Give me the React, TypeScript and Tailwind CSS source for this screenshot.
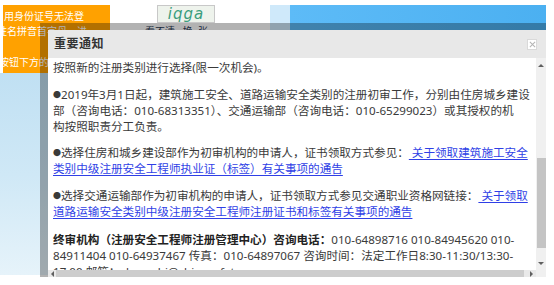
const sans = "font-[family-name:'Noto_Sans','Noto_Sans_CJK_SC',sans-serif]";

const Link = ({ children }: { children: React.ReactNode }) => (
  <a className="text-[#2f3fe6] underline underline-offset-2 decoration-1">{children}</a>
);

const Dot = () => <span className="inline-block w-[8px] text-[8px] align-[1px]">●</span>;

const Arrow = ({ dir }: { dir: "up" | "down" | "left" | "right" }) => {
  const pts = {
    up: "1,4 4,1 7,4",
    down: "1,1 4,4 7,1",
    left: "4,1 1,4 4,7",
    right: "1,1 4,4 1,7",
  }[dir];
  const vertical = dir === "up" || dir === "down";
  return (
    <svg viewBox={vertical ? "0 0 8 5" : "0 0 5 8"} className={vertical ? "w-[8px] h-[5px]" : "w-[5px] h-[8px]"}>
      <polygon points={pts} fill="#606060" />
    </svg>
  );
};

export default function App() {
  return (
    <div className={`relative w-[554px] h-[285px] overflow-hidden bg-white ${sans}`}>
      {/* page behind the dialog */}
      <div className="flex h-full">
        <div className="w-[110px] flex flex-col pt-[5px]">
          <div className="ml-[3px] h-[68px] bg-[#ffa100] overflow-hidden text-white text-[10px] leading-[15px] pt-[4px]">
            <div className="ml-[1px] whitespace-nowrap">用身份证号无法登</div>
            <div className="-ml-[6px] whitespace-nowrap">姓名拼音首字母，进</div>
            <div className="-ml-[4px] mt-[16px] whitespace-nowrap">按钮下方的</div>
          </div>
          <div className="h-[202px] bg-linear-to-b from-[#c0e0f3] via-[#cfe8f6] to-[#e6f3fa]" />
        </div>
        <div className="flex-1 flex flex-col pt-[5px]">
          <div className="flex h-[25px] items-start pr-[8px]">
            <div className="w-[47px]" />
            <div className="flex flex-col">
              <div className="w-[58px] h-[18px] bg-[#eef3ec] border border-[#c8c8c8] flex items-center justify-center">
                <span className="italic text-[15px] tracking-[1px] text-[#3a9d7d] font-[family-name:'DejaVu_Sans',sans-serif]">
                  iqga
                </span>
              </div>
              <div className="-ml-[12px] whitespace-nowrap text-[10px] leading-[10px] text-[#2a3a55] pt-[3px]">
                看不清&nbsp;&nbsp;&nbsp;换&nbsp;&nbsp;张
              </div>
            </div>
            <div className="w-[55px]" />
            <div className="w-[20px] h-[25px] bg-[#cfe9fa]" />
            <div className="flex-1 h-[25px] bg-linear-to-r from-[#5dbbf7] to-[#4bb0f1]" />
          </div>
        </div>
      </div>

      {/* dialog */}
      <div className="absolute left-[40px] top-[23px] w-[506px] h-[254px] border-l-[8px] border-t-[7px] border-black/30 bg-clip-padding flex flex-col">
        <div className="h-[28px] bg-[#e8e8e8] flex items-center justify-between pl-[6px] pr-[9px]">
          <span className="text-[12px] tracking-[0.5px] font-semibold text-[#333]">重要通知</span>
          <div className="w-[10px] h-[11px] bg-white border border-[#d9d9d9] flex items-center justify-center">
            <svg viewBox="0 0 8 8" className="w-[7px] h-[7px]">
              <path d="M1 1 L7 7 M7 1 L1 7" stroke="#b5b5b5" strokeWidth="1.2" />
            </svg>
          </div>
        </div>

        <div className="flex h-[212px] bg-white">
          <div className="flex-1 overflow-hidden pl-[5px] text-[11.6px] leading-[16px] text-[#3a3a3a] whitespace-nowrap">
            <div className="-mt-[14px]">
              <p>
                <Dot />已取得中级注册安全工程师职业资格证书的人员，在申请初始注册时可根据本人从事的专业领
                <br />
                按照新的注册类别进行选择(限一次机会)。
              </p>
              <p className="mt-[11px]">
                <Dot />2019年3月1日起，建筑施工安全、道路运输安全类别的注册初审工作，分别由住房城乡建设
                <br />
                部（咨询电话：010-68313351）、交通运输部（咨询电话：010-65299023）或其授权的机
                <br />
                构按照职责分工负责。
              </p>
              <p className="mt-[10px]">
                <Dot />选择住房和城乡建设部作为初审机构的申请人，证书领取方式参见：<Link>&nbsp;关于领取建筑施工安全</Link>
                <br />
                <Link>类别中级注册安全工程师执业证（标签）有关事项的通告</Link>
              </p>
              <p className="mt-[11px]">
                <Dot />选择交通运输部作为初审机构的申请人，证书领取方式参见交通职业资格网链接：<Link>&nbsp;关于领取</Link>
                <br />
                <Link>道路运输安全类别中级注册安全工程师注册证书和标签有关事项的通告</Link>
              </p>
              <p className="mt-[12px]">
                <b className="text-[#222]">终审机构（注册安全工程师注册管理中心）咨询电话：</b>010-64898716 010-84945620 010-
                <br />
                84911404 010-64937467 传真：010-64897067 咨询时间：法定工作日8:30-11:30/13:30-
                <br />
                17:00 邮箱：zhuceshi@chinasafety.ac.cn
              </p>
            </div>
          </div>
          <div className="w-[10px] bg-[#f0f0f0] flex flex-col items-center">
            <div className="h-[14px] flex items-center justify-center">
              <Arrow dir="up" />
            </div>
            <div className="h-[86px]" />
            <div className="w-[9px] h-[90px] bg-[#c4c4c4]" />
            <div className="flex-1" />
            <div className="h-[14px] flex items-center justify-center">
              <Arrow dir="down" />
            </div>
          </div>
        </div>

        <div className="h-[7px] flex bg-[#e9e9e9]">
          <div className="w-[8px] flex items-center justify-center">
            <Arrow dir="left" />
          </div>
          <div className="w-[468px] bg-[#cdcdcd]" />
          <div className="w-[2px]" />
          <div className="w-[10px] flex items-center justify-center">
            <Arrow dir="right" />
          </div>
          <div className="flex-1 bg-[#f0f0f0]" />
        </div>
      </div>
    </div>
  );
}
